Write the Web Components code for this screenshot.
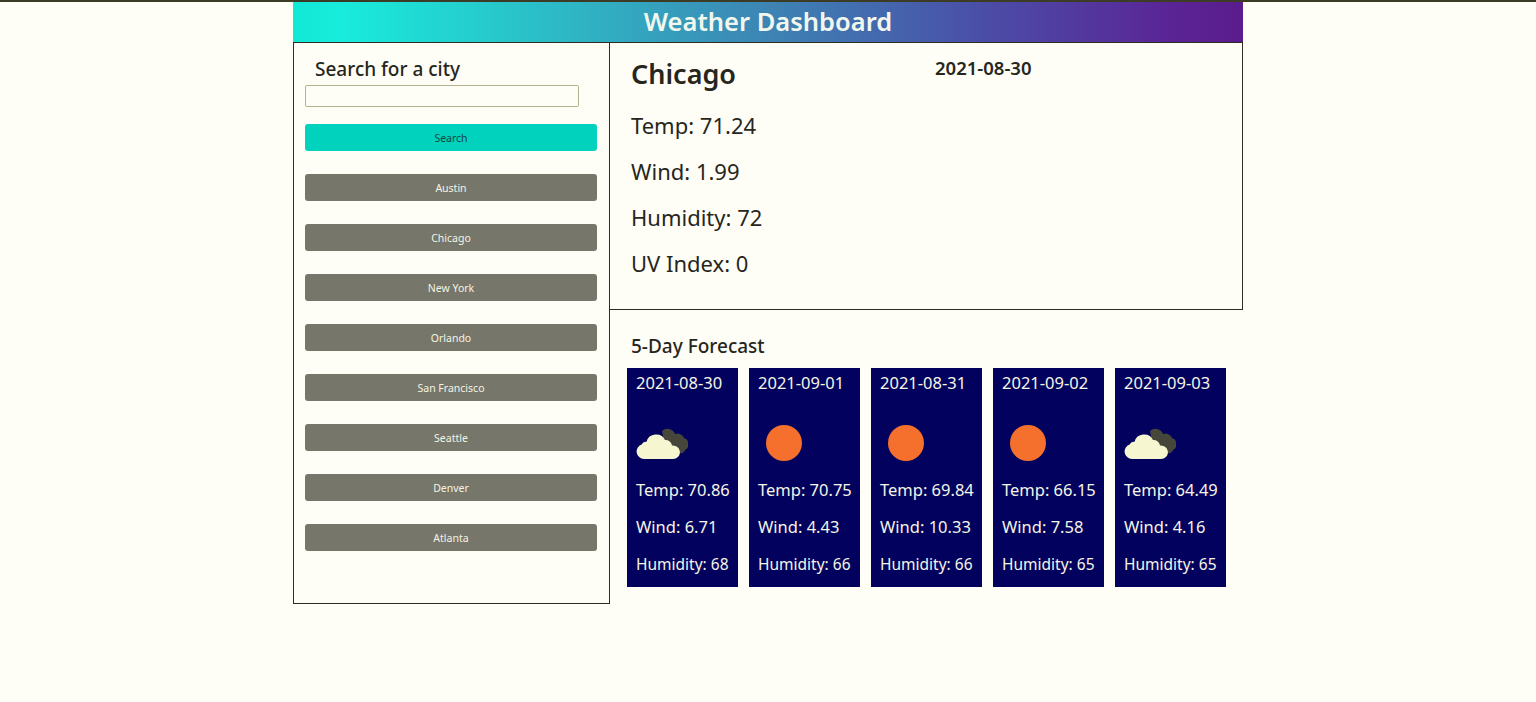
<!DOCTYPE html>
<html lang="en"><head><meta charset="utf-8"><title>Weather Dashboard</title>
<style>
html,body{margin:0;padding:0;height:100%}
body{background-color:#fefef7;border-top:2px solid #3b3b26;box-sizing:border-box;font-family:"Noto Sans","Open Sans",sans-serif;color:#26261c;overflow:hidden}
</style></head><body>
<weather-app></weather-app>
<script>
const T=(html)=>{const t=document.createElement('template');t.innerHTML=html;return t};
const def=(name,tpl,extra)=>customElements.define(name,class extends HTMLElement{
  constructor(){super();this.attachShadow({mode:'open'}).appendChild(tpl.content.cloneNode(true));}
  connectedCallback(){extra&&extra(this)}
});
def('app-header',T(`<style>:host{display:block;height:40px;background:linear-gradient(90deg,#12e8d6 0%,#18ecdc 5%,#2fb5c4 30%,#3d84b4 50%,#4a4fa8 72%,#5a2596 92%,#5b1c8c 100%);color:#f2f7ee;text-align:center;font-size:25.5px;font-weight:600;line-height:39px}</style><slot></slot>`));
def('city-button',T(`<style>:host{display:flex;align-items:center;justify-content:center;height:27px;border-radius:3px;background:var(--bg,#76766a);color:var(--fg,#f4f4e4);font-size:10.5px;margin-top:23px}:host([primary]){--bg:#00d2be;--fg:#16463f;margin-top:17px}</style><slot></slot>`));
def('search-panel',T(`<style>:host{display:block;box-sizing:border-box;width:317px;height:562px;border:1px solid #2c2c20;border-top-width:1px;padding:12px 12px 0 11px}
h3{margin:0 0 0 10px;font-size:19px;font-weight:500;line-height:28px}
.box{display:block;box-sizing:border-box;width:274px;height:22px;border:1px solid #b5b28f;border-radius:2px;margin-top:2px;padding:0;background:transparent;outline:0}
</style><h3>Search for a city</h3><input class="box" type="text" aria-label="Search for a city"><slot></slot>`));
def('stat-line',T(`<style>:host{display:block;font-size:22px;line-height:30px;margin-top:16px}</style><slot></slot>`));
def('current-weather',T(`<style>:host{display:block;box-sizing:border-box;height:268px;border:1px solid #2c2c20;border-left:0;padding:11px 21px 0}
.top{display:flex;height:40px;align-items:flex-start}
h2{margin:0;font-size:27px;font-weight:600;line-height:40px;width:304px}
.d{font-size:18.5px;font-weight:600;line-height:28px}
</style><div class="top"><h2>Chicago</h2><span class="d">2021-08-30</span></div><slot></slot>`));
const sun=`<svg width="52" height="40" viewBox="0 0 52 40"><circle cx="26" cy="20" r="18" fill="#f5702c"/></svg>`;
const cloud=`<svg width="52" height="40" viewBox="0 0 52 40"><path d="M26 8a8 8 0 0 1 13 3 7 7 0 0 1 9 4 6.500 6.500 0 0 1 1 12 5 5 0 0 1-6 3H30Z" fill="#46463a"/><path d="M8 36a7.500 7.500 0 0 1-2-14.700C7 19 9 18.500 10.500 18.800A10 10 0 0 1 29 17a7 7 0 0 1 7 5.500A7 7 0 0 1 44 29a7 7 0 0 1-7 7Z" fill="#f6f6d0"/></svg>`;
def('forecast-card',T(`<style>:host{display:block;box-sizing:border-box;width:111px;height:219px;background:#02025e;color:#f5f5e6;padding:2px 0 0 9px;font-size:16.5px;white-space:nowrap}
.d{line-height:25px}.i{height:40px;margin:28px 0 15px;}.i svg{display:block}
.r{line-height:24px;margin-bottom:13px}.h{font-size:15.5px;margin-bottom:0}
</style><div class="d"></div><div class="i"></div><div class="r t"></div><div class="r w"></div><div class="r h"></div>`),el=>{
  const s=el.shadowRoot;
  s.querySelector('.d').textContent=el.getAttribute('date');
  s.querySelector('.i').innerHTML=el.getAttribute('icon')==='sun'?sun:cloud;
  s.querySelector('.t').textContent='Temp: '+el.getAttribute('temp');
  s.querySelector('.w').textContent='Wind: '+el.getAttribute('wind');
  s.querySelector('.h').textContent='Humidity: '+el.getAttribute('hum');
});
def('forecast-row',T(`<style>:host{display:block;padding:21px 0 0 17px}
h3{margin:0 0 0 4px;font-size:19px;font-weight:500;line-height:30px}
.c{display:flex;gap:11px;margin-top:7px}
</style><h3>5-Day Forecast</h3><div class="c"><slot></slot></div>`));
def('weather-app',T(`<style>:host{display:block;width:950px;margin:0 auto}
.cols{display:flex}.main{flex:1;min-width:0}
</style>
<app-header>Weather Dashboard</app-header>
<div class="cols">
<search-panel>
<city-button primary>Search</city-button>
<city-button>Austin</city-button><city-button>Chicago</city-button><city-button>New York</city-button><city-button>Orlando</city-button><city-button>San Francisco</city-button><city-button>Seattle</city-button><city-button>Denver</city-button><city-button>Atlanta</city-button>
</search-panel>
<div class="main">
<current-weather><stat-line>Temp: 71.24</stat-line><stat-line>Wind: 1.99</stat-line><stat-line>Humidity: 72</stat-line><stat-line>UV Index: 0</stat-line></current-weather>
<forecast-row>
<forecast-card date="2021-08-30" icon="cloud" temp="70.86" wind="6.71" hum="68"></forecast-card>
<forecast-card date="2021-09-01" icon="sun" temp="70.75" wind="4.43" hum="66"></forecast-card>
<forecast-card date="2021-08-31" icon="sun" temp="69.84" wind="10.33" hum="66"></forecast-card>
<forecast-card date="2021-09-02" icon="sun" temp="66.15" wind="7.58" hum="65"></forecast-card>
<forecast-card date="2021-09-03" icon="cloud" temp="64.49" wind="4.16" hum="65"></forecast-card>
</forecast-row>
</div></div>`));
</script>
</body></html>
